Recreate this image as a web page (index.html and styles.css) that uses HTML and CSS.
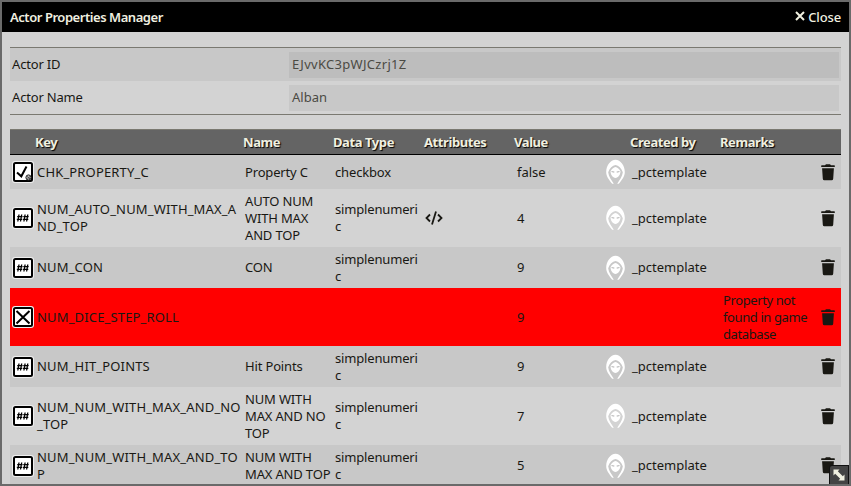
FILE: index.html
```html
<!DOCTYPE html>
<html lang="en">
<head>
<meta charset="utf-8">
<title>Actor Properties Manager</title>
<link rel="stylesheet" href="styles.css">
</head>
<body>
<svg class="defs" aria-hidden="true">
  <symbol id="num" viewBox="0 0 22 22"><rect width="22" height="22" rx="3" fill="#eee"/><rect x="2" y="2" width="18" height="18" rx="1.5" fill="#fff" stroke="#000" stroke-width="2"/><path d="M7 7.5 5.8 14.5M9.7 7.5 8.5 14.5M5.2 9.6h5.4M4.8 12.4h5.4M13.1 7.5l-1.2 7M15.8 7.5l-1.2 7M11.3 9.6h5.4M10.9 12.4h5.4" fill="none" stroke="#000" stroke-width="1.3"/></symbol>
  <symbol id="check" viewBox="0 0 22 22"><rect width="22" height="22" rx="3" fill="#eee"/><rect x="2" y="2" width="18" height="18" rx="1.5" fill="#fff" stroke="#000" stroke-width="2"/><path d="m5 11.5 4.300 3.800L14.500 5.500" fill="none" stroke="#000" stroke-width="2"/><circle cx="16.500" cy="16.500" r="2.600" fill="#bbb" stroke="#222"/><path d="m15 15.500 1.500 1 2-1M15.300 18l1.300-1 1.800 1" fill="none" stroke="#222" stroke-width=".7"/></symbol>
  <symbol id="missing" viewBox="0 0 22 22"><rect width="22" height="22" rx="3" fill="#eee"/><rect x="2" y="2" width="18" height="18" rx="1.5" fill="#fff" stroke="#000" stroke-width="2"/><path d="m4.500 5 13 12.500M17.500 5l-13 12.500" fill="none" stroke="#000" stroke-width="2"/></symbol>
  <symbol id="hood" viewBox="0 0 22 26"><path fill="#fff" d="M10.500.8C5.500.8 1.200 6.500 1.200 13c0 4.500 3 8 6 11.800h1.600C6.500 21 3.500 17.500 3.200 13.200 4.500 9 7.500 6.400 10.500 5.900c3 .5 6 3.100 7.300 7.300-.3 4.300-3.300 7.800-5.600 11.600h1.600c3-3.800 6-7.300 6-11.800C19.800 6.500 15.500.8 10.500.8Z"/><path fill="#fff" d="M10.500 8C8.600 8.400 6.500 10 5.500 12.300c.1 3.500 2.300 6.600 5 6.600s4.900-3.100 5-6.600c-1-2.300-3.100-3.900-5-4.300Z"/><path stroke="#bdbdbd" stroke-width="1.200" d="m6.500 12.500 2.800.6M14.500 12.500l-2.800.6"/></symbol>
  <symbol id="trash" viewBox="0 0 14 17"><path fill="#191813" d="M.7 1.300H4L5 .3h4l1 1h3.300a.5.500 0 0 1 .5.500v1.200H.2V1.800a.5.500 0 0 1 .5-.5ZM1.100 4.200h11.800l-.7 10.600a1.600 1.600 0 0 1-1.600 1.500H3.400a1.600 1.600 0 0 1-1.600-1.500Z"/></symbol>
</svg>
<div class="window">
  <header class="titlebar">
    <h1>Actor Properties Manager</h1>
    <a class="close"><svg class="cross" viewBox="0 0 10 10"><path d="m1 1 8 8M9 1 1 9"/></svg><span>Close</span></a>
  </header>
  <main>
    <div class="fields">
      <div class="field"><label>Actor ID</label><div class="input id">EJvvKC3pWJCzrj1Z</div></div>
      <div class="field"><label>Actor Name</label><div class="input">Alban</div></div>
    </div>
    <div class="table">
      <div class="head"><span></span><span>Key</span><span>Name</span><span>Data Type</span><span>Attributes</span><span>Value</span><span></span><span>Created by</span><span>Remarks</span><span></span></div>
      <div class="row"><svg class="type"><use href="#check"/></svg><span class="key">CHK_PROPERTY_C</span><span class="name">Property C</span><span class="data">checkbox</span><span></span><span class="value">false</span><svg class="hood"><use href="#hood"/></svg><span class="creator">_pctemplate</span><span></span><svg class="trash"><use href="#trash"/></svg></div>
      <div class="row"><svg class="type"><use href="#num"/></svg><span class="key">NUM_AUTO_NUM_WITH_MAX_A<br>ND_TOP</span><span class="name">AUTO NUM<br>WITH MAX<br>AND TOP</span><span class="data">simplenumeri<br>c</span><svg class="code" viewBox="0 0 18 14"><path d="M5 3.500 1.500 7 5 10.500M13 3.500 16.500 7 13 10.500M11 .5 7 13.500"/></svg><span class="value">4</span><svg class="hood"><use href="#hood"/></svg><span class="creator">_pctemplate</span><span></span><svg class="trash"><use href="#trash"/></svg></div>
      <div class="row"><svg class="type"><use href="#num"/></svg><span class="key">NUM_CON</span><span class="name">CON</span><span class="data">simplenumeri<br>c</span><span></span><span class="value">9</span><svg class="hood"><use href="#hood"/></svg><span class="creator">_pctemplate</span><span></span><svg class="trash"><use href="#trash"/></svg></div>
      <div class="row error"><svg class="type"><use href="#missing"/></svg><span class="key">NUM_DICE_STEP_ROLL</span><span></span><span></span><span></span><span class="value">9</span><span></span><span></span><span class="remark">Property not<br>found in game<br>database</span><svg class="trash"><use href="#trash"/></svg></div>
      <div class="row"><svg class="type"><use href="#num"/></svg><span class="key">NUM_HIT_POINTS</span><span class="name">Hit Points</span><span class="data">simplenumeri<br>c</span><span></span><span class="value">9</span><svg class="hood"><use href="#hood"/></svg><span class="creator">_pctemplate</span><span></span><svg class="trash"><use href="#trash"/></svg></div>
      <div class="row"><svg class="type"><use href="#num"/></svg><span class="key">NUM_NUM_WITH_MAX_AND_NO<br>_TOP</span><span class="name">NUM WITH<br>MAX AND NO<br>TOP</span><span class="data">simplenumeri<br>c</span><span></span><span class="value">7</span><svg class="hood"><use href="#hood"/></svg><span class="creator">_pctemplate</span><span></span><svg class="trash"><use href="#trash"/></svg></div>
      <div class="row"><svg class="type"><use href="#num"/></svg><span class="key">NUM_NUM_WITH_MAX_AND_TO<br>P</span><span class="name">NUM WITH<br>MAX AND TOP</span><span class="data">simplenumeri<br>c</span><span></span><span class="value">5</span><svg class="hood"><use href="#hood"/></svg><span class="creator">_pctemplate</span><span></span><svg class="trash"><use href="#trash"/></svg></div>
    </div>
  </main>
  <div class="resize"><svg viewBox="0 0 12 12"><path d="M.5.500h6L4.800 2.200l5 5L11.500 5.500v6h-6l1.700-1.700-5-5L.5 6.500Z"/></svg></div>
</div>
</body>
</html>
```

FILE: styles.css
```css
* { box-sizing: border-box; }
body { margin: 0; font: 13px/17px "Noto Sans", sans-serif; color: #191813; }
.defs { position: absolute; width: 0; height: 0; }
.window { position: relative; width: 851px; height: 486px; border: 2px solid #6a6a6a; background: #d3d3d3; overflow: hidden; }
.titlebar { height: 30px; padding: 0 8px; display: flex; align-items: center; justify-content: space-between; background: #000; color: #f0f0e0; }
.titlebar h1 { margin: 0; font-size: 13px; line-height: 17px; font-weight: 600; letter-spacing: -0.45px; }
.close { display: flex; align-items: center; gap: 3px; font-weight: 500; letter-spacing: -0.15px; }
.cross { width: 10px; height: 10px; margin-top: -2px; fill: none; stroke: #f0f0e0; stroke-width: 2; }
main { padding: 15px 8px 0; }
.fields { border-top: 1px solid #7a7971; border-bottom: 1px solid #7a7971; }
.field { display: grid; grid-template-columns: 279px 550px; height: 33px; align-items: center; }
.field:first-child { background: #c8c8c8; }
label { padding-left: 2px; letter-spacing: -.18px; }
.input { height: 26px; line-height: 24px; margin-top: 1px; padding-left: 3px; background: rgba(0, 0, 0, .05); color: #4b4a44; }
.id { letter-spacing: .3px; }
.table { margin-top: 14px; }
.head, .row { display: grid; grid-template-columns: 25px 208px 90px 91px 90px 91px 25px 90px 88px 33px; align-items: center; }
.head { height: 26px; border-top: 1px solid #7a7971; border-bottom: 1px solid #000; background: #646464; color: #f0f0e0; font-weight: 700; text-shadow: 1px 1px 1px #000; letter-spacing: -.42px; white-space: nowrap; }
.row { min-height: 34px; padding: 3.5px 0; white-space: nowrap; }
.row:nth-child(even) { background: #c8c8c8; }
.row.error { background: #f00; }
.row span { padding-left: 2px; }
.row .value { padding-left: 3px; }
.key { letter-spacing: .16px; }
.name, .data { letter-spacing: -.16px; }
.remark { letter-spacing: -.4px; }
.row .remark { padding-left: 3px; }
.type { width: 22px; height: 22px; margin: 0 0 0 2px; }
.hood { width: 22px; height: 26px; }
.row .hood { margin-top: 0; }
.trash { width: 14px; height: 17px; margin-left: 13px; }
.code { width: 18px; height: 14px; margin: 0 0 0 1px; fill: none; stroke: #191813; stroke-width: 1.8; }
.resize { position: absolute; right: 0; bottom: 0; width: 20px; height: 19px; display: grid; place-items: center; background: #444; border: 1px solid #111; border-width: 1px 1px 0 1px; border-radius: 3px 0 0; }
.resize svg { width: 12px; height: 12px; fill: #f0f0e0; }
```
